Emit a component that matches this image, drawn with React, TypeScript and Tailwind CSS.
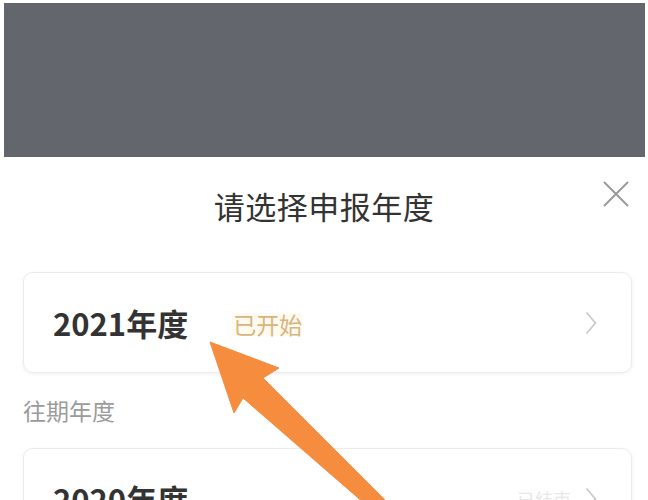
const font = { fontFamily: '"Noto Sans CJK SC", "Noto Sans", sans-serif' }

function Chevron() {
  return (
    <svg viewBox="0 0 12 24" className="h-[24px] w-[12px] shrink-0">
      <path d="M1.5 1.5 L10.5 12 L1.5 22.5" stroke="#c6c6c6" strokeWidth="1.6" fill="none" />
    </svg>
  )
}

function YearCard({ year, tag, tagClass }: { year: string; tag?: string; tagClass?: string }) {
  return (
    <div className="flex h-[101px] items-center rounded-[10px] border border-[#ececec] bg-white pl-[29px] pr-[34px] shadow-[0_1px_4px_rgba(0,0,0,0.06)]">
      <span className="text-[31px] font-bold leading-none text-[#333333]">{year}</span>
      {tag && <span className={tagClass}>{tag}</span>}
      <Chevron />
    </div>
  )
}

export default function App() {
  return (
    <div className="relative h-[500px] w-full overflow-hidden bg-white" style={font}>
      {/* dimmed page behind the sheet */}
      <div className="ml-[4px] mr-[3px] mt-[3px] h-[154px] bg-[#63676d]" />

      {/* bottom sheet */}
      <div className="relative">
        <div className="flex h-[96px] items-center justify-center">
          <span className="text-[31px] leading-none tracking-[0.5px] text-[#333333]">请选择申报年度</span>
        </div>
        <button className="absolute right-[18px] top-[23px] h-[28px] w-[28px]">
          <svg viewBox="0 0 28 28" className="h-full w-full">
            <path d="M2 2 L26 26 M26 2 L2 26" stroke="#9a9a9a" strokeWidth="2" fill="none" />
          </svg>
        </button>

        <div className="ml-[23px] mr-[16px] mt-[19px]">
          <YearCard
            year="2021年度"
            tag="已开始"
            tagClass="ml-[44px] mr-auto mt-[4px] rounded-[4px] bg-[#fffaf0] px-[1px] text-[23px] leading-none text-[#d8b57c]"
          />
          <div className="flex h-[75px] items-center text-[23px] text-[#9b9b9b]">往期年度</div>
          <YearCard
            year="2020年度"
            tag="已结束"
            tagClass="ml-auto mr-[14px] text-[18px] leading-none text-[#e8e8e8]"
          />
        </div>
      </div>

      {/* orange annotation arrow */}
      <svg className="pointer-events-none absolute left-0 top-0" width="648" height="500" viewBox="0 0 648 500">
        <polygon
          points="210,342 279,368 263,378 395,510 372,510 243,398 234,413"
          fill="#f68c3e"
          stroke="#f68c3e"
          strokeWidth="1"
          strokeLinejoin="round"
        />
      </svg>
    </div>
  )
}
